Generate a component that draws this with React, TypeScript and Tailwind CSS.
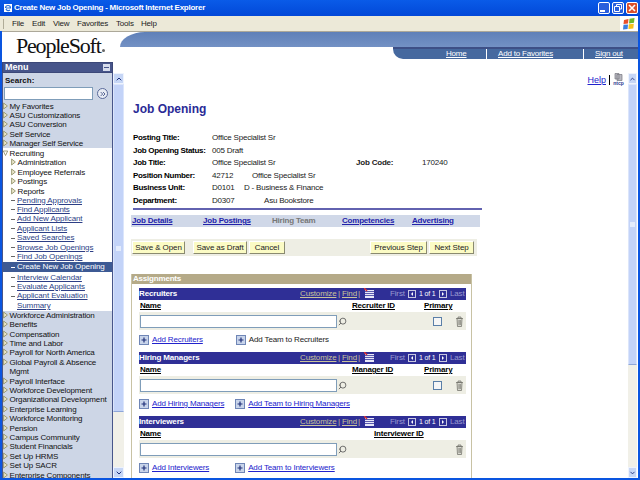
import { Search, ChevronsRight, ChevronUp, ChevronDown } from 'lucide-react';

const arial = "font-['Liberation_Sans',Arial,sans-serif]";

function Triangle({ down }: { down?: boolean }) {
  return (
    <svg width="5" height="8" viewBox="0 0 5 8" className="shrink-0">
      {down ? (
        <path d="M0.3 2 L4.7 2 L2.5 6.5 Z" fill="#fff" stroke="#8a8a60" strokeWidth="0.8" />
      ) : (
        <path d="M0.6 1 L4.4 4 L0.6 7 Z" fill="#e8e4c8" stroke="#8a8a60" strokeWidth="0.8" />
      )}
    </svg>
  );
}

function Folder({ label, indent, down }: { label: string; indent?: boolean; down?: boolean }) {
  return (
    <div className={`flex items-start h-[9.4px] leading-[9.4px] text-[8px] tracking-[-0.15px] text-[#111] gap-[1.5px] ${indent ? 'pl-[8px]' : ''}`}>
      <Triangle down={down} />
      <span className="whitespace-nowrap">{label}</span>
    </div>
  );
}

function MenuLink({ label, active }: { label: string; active?: boolean }) {
  return (
    <div
      className={`flex items-center pl-[8px] gap-[2px] text-[8px] tracking-[-0.1px] ${
        active ? 'h-[10px] my-[0.6px] bg-[#3d5a94] text-white' : 'h-[9.4px] text-[#2d3f86]'
      }`}
    >
      <span className={`w-[4px] h-px ${active ? 'bg-white' : 'bg-[#666]'}`} />
      <span className={`whitespace-nowrap ${active ? '' : 'underline'}`}>{label}</span>
    </div>
  );
}

function ScrollBar({ trackClass }: { trackClass: string }) {
  return (
    <div className="flex flex-col h-full w-full bg-[#f1f0e8]">
      <div className="h-[11px] shrink-0 bg-[#c6d6f6] border border-[#eef3fd] flex items-center justify-center">
        <ChevronUp size={8} strokeWidth={3} className="text-[#1d2f7a]" />
      </div>
      <div className={`flex-1 bg-[#c3d3f8] border border-[#dbe5fb] border-b-[#8ea6d8] flex items-center justify-center ${trackClass}`}>
        <div className="w-[5px] h-[5px] bg-[#e4ecfc]" />
      </div>
      <div className="h-[11px] shrink-0 bg-[#c6d6f6] border border-[#eef3fd] flex items-center justify-center">
        <ChevronDown size={8} strokeWidth={3} className="text-[#1d2f7a]" />
      </div>
    </div>
  );
}

function Sidebar() {
  return (
    <div className={`w-[111px] shrink-0 flex flex-col ${arial}`}>
      <div className="h-[11px] bg-[#47558a] border border-[#3c4878] flex items-center justify-between pl-[2px] pr-[2px]">
        <span className="text-[9px] font-bold text-white leading-none">Menu</span>
        <span className="w-[7px] h-[7px] bg-[#d6dcec] flex items-center justify-center">
          <span className="w-[5px] h-px bg-[#47558a]" />
        </span>
      </div>
      <div className="flex-1 bg-[#cdd6e6] border-x border-[#47558a] overflow-hidden">
        <div className="text-[8px] font-bold text-[#111] pl-[2px] h-[13.5px] leading-[15px]">Search:</div>
        <div className="flex items-center pl-[1px] h-[14px]">
          <div className="w-[89px] h-[13px] bg-white border border-[#7f9db9]" />
          <div className="ml-[4px] w-[11px] h-[11px] rounded-full border border-[#5a6a9a] bg-[#e8ecf4] flex items-center justify-center">
            <ChevronsRight size={8} strokeWidth={2.5} className="text-[#3a4a80]" />
          </div>
        </div>
        <div className="pt-[1px]">
          {['My Favorites', 'ASU Customizations', 'ASU Conversion', 'Self Service', 'Manager Self Service'].map((m) => (
            <Folder key={m} label={m} />
          ))}
        </div>
        <div className="bg-white py-[0.5px]">
          <Folder label="Recruiting" down />
          {['Administration', 'Employee Referrals', 'Postings', 'Reports'].map((m) => (
            <Folder key={m} label={m} indent />
          ))}
          {['Pending Approvals', 'Find Applicants', 'Add New Applicant', 'Applicant Lists', 'Saved Searches', 'Browse Job Openings', 'Find Job Openings'].map((m) => (
            <MenuLink key={m} label={m} />
          ))}
          <MenuLink label="Create New Job Opening" active />
          {['Interview Calendar', 'Evaluate Applicants', 'Applicant Evaluation'].map((m) => (
            <MenuLink key={m} label={m} />
          ))}
          <div className="h-[9.4px] leading-[9.4px] text-[8px] tracking-[-0.1px] text-[#2d3f86] underline pl-[14px]">Summary</div>
        </div>
        {['Workforce Administration', 'Benefits', 'Compensation', 'Time and Labor', 'Payroll for North America', 'Global Payroll & Absence'].map((m) => (
          <Folder key={m} label={m} />
        ))}
        <div className="h-[9.4px] leading-[9.4px] text-[8px] tracking-[-0.15px] text-[#111] pl-[6.5px]">Mgmt</div>
        {['Payroll Interface', 'Workforce Development', 'Organizational Development', 'Enterprise Learning', 'Workforce Monitoring', 'Pension', 'Campus Community', 'Student Financials', 'Set Up HRMS', 'Set Up SACR', 'Enterprise Components'].map((m) => (
          <Folder key={m} label={m} />
        ))}
      </div>
    </div>
  );
}

function Field({ label, children }: { label: string; children: React.ReactNode }) {
  return (
    <div className="flex h-[12.5px] items-center text-[8px] tracking-[-0.2px] text-[#222]">
      <span className="w-[79px] shrink-0 font-bold tracking-[-0.3px] text-black whitespace-nowrap">{label}</span>
      {children}
    </div>
  );
}

function Btn({ label, w, ml }: { label: string; w: string; ml?: string }) {
  return (
    <div className={`h-[13px] flex items-center justify-center bg-[#fbfbc4] border-r border-b border-[#8a8a70] border-t border-l border-t-white border-l-white text-[8px] tracking-[-0.1px] text-[#222] whitespace-nowrap ${w} ${ml ?? ''}`}>
      {label}
    </div>
  );
}

function PlusBox() {
  return (
    <svg width="10" height="10" viewBox="0 0 10 10" className="shrink-0">
      <rect x="0.5" y="0.5" width="9" height="9" fill="#c8d4ea" stroke="#6f86b6" />
      <path d="M2.5 5 H7.5 M5 2.5 V7.5" stroke="#1e2f78" strokeWidth="1.2" />
    </svg>
  );
}

function Trash() {
  return (
    <svg width="9" height="11" viewBox="0 0 9 11" className="shrink-0">
      <path d="M1 2.5 H8 M3 2.5 V1 H6 V2.5 M2 2.5 L2.5 10.5 H6.5 L7 2.5 Z M4 4 V9 M5.3 4 V9" fill="#d8d8d0" stroke="#77776f" strokeWidth="0.8" />
    </svg>
  );
}

function GridIcon() {
  return (
    <svg width="10" height="10" viewBox="0 0 10 10" className="shrink-0 -mt-[2px]">
      <rect x="1" y="2" width="9" height="8" fill="#e8e8f8" />
      <path d="M1 3.5 H10 M1 5.5 H10 M1 7.5 H10" stroke="#5a5ab0" strokeWidth="1" />
      <path d="M0 0 L3 3" stroke="#e03030" strokeWidth="1.5" />
    </svg>
  );
}

function Pager({ dir }: { dir: 'l' | 'r' }) {
  return (
    <svg width="8" height="8" viewBox="0 0 8 8" className="shrink-0">
      <rect x="0.5" y="0.5" width="7" height="7" fill="#2f2f96" stroke="#c8c8e0" />
      <path d={dir === 'l' ? 'M5 2 L3 4 L5 6 Z' : 'M3 2 L5 4 L3 6 Z'} fill="#fff" />
    </svg>
  );
}

function Team({
  title,
  idLabel,
  idWidth,
  primary,
  add,
  team,
  teamLink,
  teamGap,
}: {
  title: string;
  idLabel: string;
  idWidth: string;
  primary?: boolean;
  add: string;
  team: string;
  teamLink?: boolean;
  teamGap: string;
}) {
  return (
    <div className="flex flex-col">
      <div className="ml-[1px] h-[12px] bg-[#2f2f96] flex items-center text-white text-[8px] tracking-[-0.15px]">
        <span className="font-bold w-[161px] shrink-0">{title}</span>
        <span className="underline text-[#c9c39a] w-[38px]">Customize</span>
        <span className="text-[#c9c39a] w-[4px]">|</span>
        <span className="underline text-[#c9c39a] w-[16px]">Find</span>
        <span className="text-[#c9c39a] w-[6px]">|</span>
        <GridIcon />
        <span className="text-[#9a9ad0] ml-[16px] w-[18px]">First</span>
        <Pager dir="l" />
        <span className="text-[7px] ml-[3px] w-[20px]">1 of 1</span>
        <Pager dir="r" />
        <span className="text-[#9a9ad0] ml-[3px]">Last</span>
      </div>
      <div className="ml-[2px] h-[12px] flex items-center text-[8px] tracking-[-0.2px] font-bold text-black underline">
        <span className={idWidth}>Name</span>
        <span className={primary ? 'w-[72px]' : ''}>{idLabel}</span>
        {primary && <span>Primary</span>}
      </div>
      <div className="ml-[1px] h-[18px] bg-[#eeeee4] flex items-center pl-[1px]">
        <div className="w-[197px] h-[13px] bg-white border border-[#7f9db9]" />
        <Search size={9} strokeWidth={2.2} className="ml-[1px] text-[#555] -scale-x-100 shrink-0" />
        <div className="ml-auto flex items-center">
          {primary && <span className="w-[9px] h-[9px] border border-[#5a7fa8] bg-[#f6f6f6] mr-[13px]" />}
          <span className="mr-[2px]"><Trash /></span>
        </div>
      </div>
      <div className="h-[22px] flex items-center text-[8px] tracking-[-0.15px] pl-[1px] pb-[2px]">
        <PlusBox />
        <span className="ml-[3px] text-[#2222cc] underline">{add}</span>
        <span className={`${teamGap} mr-[3px]`}><PlusBox /></span>
        <span className={teamLink ? 'text-[#2222cc] underline' : 'text-[#222]'}>{team}</span>
      </div>
    </div>
  );
}

function Main() {
  return (
    <div className={`flex-1 min-w-0 overflow-hidden bg-white flex flex-col ${arial}`}>
      <div className="h-[38px] shrink-0 flex items-start justify-end pt-[13px] pr-[4px]">
        <span className="text-[9px] text-[#2222cc] underline leading-none mt-[1px]">Help</span>
        <span className="w-px h-[10px] bg-black mx-[3px]" />
        <span className="flex flex-col items-center w-[11px] -mt-[2px]">
          <svg width="9" height="8" viewBox="0 0 9 8">
            <path d="M1 0.5 H5 V6 H1 Z M3 1.5 H8 V7.5 H3 Z" fill="#b8b8c0" stroke="#77777f" strokeWidth="0.7" />
          </svg>
          <span className="text-[5px] leading-[5px] text-[#2a3a90] font-bold">ntcp</span>
        </span>
      </div>
      <div className="pl-[9px] text-[12px] font-bold text-[#2a2a96] h-[16px] leading-[16px] mt-[1px]">Job Opening</div>
      <div className="pl-[9px] mt-[15px]">
        <Field label="Posting Title:">Office Specialist Sr</Field>
        <Field label="Job Opening Status:">005 Draft</Field>
        <Field label="Job Title:">
          <span className="w-[144px]">Office Specialist Sr</span>
          <span className="font-bold w-[66px]">Job Code:</span>
          170240
        </Field>
        <Field label="Position Number:">
          <span className="w-[40px]">42712</span>Office Specialist Sr
        </Field>
        <Field label="Business Unit:">
          <span className="w-[32px]">D0101</span>D - Business &amp; Finance
        </Field>
        <Field label="Department:">
          <span className="w-[52px]">D0307</span>Asu Bookstore
        </Field>
      </div>
      <div className="ml-[9px] mt-[1px] w-[349px] h-[2px] shrink-0 bg-[#6262b0]" />
      <div className="ml-[7px] mt-[5px] w-[349px] h-[12px] shrink-0 bg-[#d0d8e8] flex items-center text-[8px] tracking-[-0.2px] font-bold pl-[1px]">
        <span className="text-[#2222aa] underline w-[71px]">Job Details</span>
        <span className="text-[#2222aa] underline w-[69px]">Job Postings</span>
        <span className="text-[#777] w-[70px]">Hiring Team</span>
        <span className="text-[#2222aa] underline w-[70px]">Competencies</span>
        <span className="text-[#2222aa] underline">Advertising</span>
      </div>
      <div className="ml-[7px] mt-[12px] w-[346px] h-[17px] shrink-0 bg-[#eeeee4] flex items-center pl-[1px]">
        <Btn label="Save & Open" w="w-[53px]" />
        <Btn label="Save as Draft" w="w-[54px]" ml="ml-[8px]" />
        <Btn label="Cancel" w="w-[36px]" ml="ml-[2px]" />
        <Btn label="Previous Step" w="w-[57px]" ml="ml-auto" />
        <Btn label="Next Step" w="w-[45px]" ml="ml-[2px] mr-[3px]" />
      </div>
      <div className="ml-[7px] mt-[18px] w-[341px] flex-1 border-x border-[#c8c2a4] flex flex-col">
        <div className="h-[10px] bg-[#b5aa88] text-white font-bold text-[8px] tracking-[-0.2px] leading-[10px] pl-[1px] shrink-0">Assignments</div>
        <div className="pl-[6px] pr-[5px] pt-[4px]">
          <Team title="Recruiters" idLabel="Recruiter ID" idWidth="w-[212px]" primary add="Add Recruiters" team="Add Team to Recruiters" teamGap="ml-[33px]" />
          <Team title="Hiring Managers" idLabel="Manager ID" idWidth="w-[212px]" primary add="Add Hiring Managers" team="Add Team to Hiring Managers" teamLink teamGap="ml-[11px]" />
          <Team title="Interviewers" idLabel="Interviewer ID" idWidth="w-[234px]" add="Add Interviewers" team="Add Team to Interviewers" teamLink teamGap="ml-[26px]" />
        </div>
      </div>
    </div>
  );
}

function WinBtn({ children, red }: { children: React.ReactNode; red?: boolean }) {
  return (
    <div className={`w-[12px] h-[12px] rounded-[2px] border border-white flex items-center justify-center ${red ? 'bg-[#d9502c]' : 'bg-[#2a5fdc]'}`}>
      {children}
    </div>
  );
}

export default function App() {
  return (
    <div className="w-[640px] h-[480px] overflow-hidden flex flex-col bg-[#0a55e0] font-['Liberation_Sans',sans-serif]">
      {/* title bar */}
      <div className="h-[16px] shrink-0 bg-gradient-to-b from-[#0a5be8] to-[#0348d8] flex items-center pl-[3px] pr-[2px]">
        <svg width="10" height="10" viewBox="0 0 10 10" className="shrink-0">
          <rect x="1" y="1" width="8" height="8" fill="#fff" />
          <path d="M2.5 5 a2.5 2.5 0 1 1 5 0 H3 M7 7 a2.5 2.5 0 0 1 -4 -1" fill="none" stroke="#2a70d8" strokeWidth="1.2" />
        </svg>
        <span className="ml-[1px] text-white font-bold text-[8px] tracking-[-0.25px] whitespace-nowrap">
          Create New Job Opening - Microsoft Internet Explorer
        </span>
        <div className="ml-auto flex gap-[2px]">
          <WinBtn><span className="w-[5px] h-[2px] bg-white mt-[6px] -ml-[3px]" /></WinBtn>
          <WinBtn>
            <svg width="8" height="8" viewBox="0 0 8 8"><path d="M2.5 2.5 V0.5 H7.5 V5 H5.5 M0.5 2.5 H5.5 V7.5 H0.5 Z" fill="none" stroke="#fff" /></svg>
          </WinBtn>
          <WinBtn red>
            <svg width="8" height="8" viewBox="0 0 8 8"><path d="M1 1 L7 7 M7 1 L1 7" stroke="#fff" strokeWidth="1.6" /></svg>
          </WinBtn>
        </div>
      </div>
      {/* menu bar */}
      <div className="h-[15px] shrink-0 bg-[#ece9d8] flex items-center text-[8px] tracking-[-0.2px] text-[#222] mr-[2px]">
        <span className="ml-[3px] w-px h-[10px] bg-[#b0ac98] mr-[8px]" />
        <span className="w-[20px]">File</span>
        <span className="w-[21px]">Edit</span>
        <span className="w-[24px]">View</span>
        <span className="w-[39px]">Favorites</span>
        <span className="w-[25px]">Tools</span>
        <span>Help</span>
        <div className="ml-auto w-[18px] h-[15px] bg-white flex items-center justify-center">
          <svg width="12" height="12" viewBox="0 0 12 12">
            <path d="M1 2 L5.5 1 L5 5.5 L0.5 6 Z" fill="#e8502a" />
            <path d="M6.5 0.8 L11.5 0 L11 4.8 L6 5.4 Z" fill="#6cb82c" />
            <path d="M0.5 6.8 L5 6.4 L4.6 11 L0 11.5 Z" fill="#3a7ee0" />
            <path d="M5.8 6.3 L10.8 5.8 L10.3 10.4 L5.4 11 Z" fill="#f6c21c" />
          </svg>
        </div>
      </div>
      {/* page */}
      <div className="flex-1 min-h-0 mx-[2px] mb-[2px] bg-white border-t border-[#aca899] flex flex-col">
        <div className="h-[30px] shrink-0 flex">
          <div className="w-[118px] shrink-0 flex items-start pl-[14px] pt-[3px]">
            <span className="font-['Liberation_Serif',serif] text-[22px] tracking-[-1.2px] text-[#111] leading-none">PeopleSoft</span>
            <span className="w-[3px] h-[3px] rounded-full bg-[#666] mt-[14px] ml-[1px]" />
          </div>
          <div className="flex-1 flex flex-col">
            <div className="h-[15px] bg-gradient-to-b from-[#5f80b8] to-[#7391c4] rounded-tl-[25px_15px]" />
            <div className="flex">
              <div className="flex-1" />
              <div className="w-[245px] h-[12px] bg-[#46699f] border-t-2 border-[#3d4f86] rounded-bl-[10px] flex items-center text-[8px] tracking-[-0.2px] text-white">
                <span className="ml-[53px] w-[41px] underline border-r border-white h-[10px] leading-[10px]">Home</span>
                <span className="ml-[11px] w-[86px] underline border-r border-white h-[10px] leading-[10px]">Add to Favorites</span>
                <span className="ml-[11px] underline">Sign out</span>
              </div>
            </div>
          </div>
        </div>
        <div className="flex-1 min-h-0 flex">
          <Sidebar />
          <div className="w-[11px] shrink-0 pt-[11px]"><ScrollBar trackClass="mb-[55px]" /></div>
          <Main />
          <div className="w-[9px] shrink-0 pt-[11px] mr-[1px]"><ScrollBar trackClass="mb-[102px]" /></div>
        </div>
      </div>
    </div>
  );
}
